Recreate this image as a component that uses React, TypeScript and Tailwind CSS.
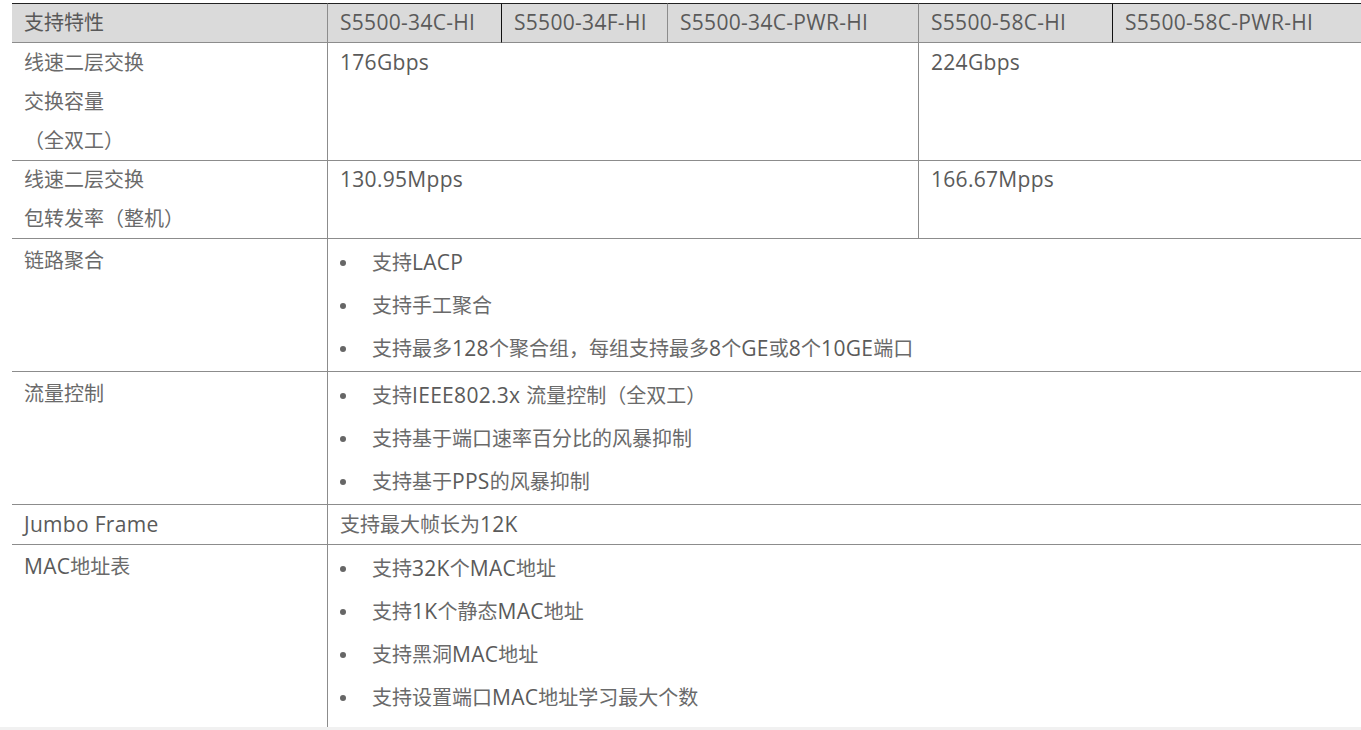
import React from "react";

const font = {
  fontFamily: '"Open Sans", "Noto Sans CJK SC", sans-serif',
};

const td = "border-b border-[#8c8c8c] px-3 align-top leading-[39px]";
const tdL = `${td} border-l`;

// Latin runs look a touch larger than the CJK runs in the source page
function T({ s }: { s: string }) {
  const parts = s.split(/([A-Za-z0-9.\- ]+)/).filter(Boolean);
  return (
    <>
      {parts.map((p, i) =>
        /[A-Za-z0-9]/.test(p) ? (
          <span key={i} className="text-[21px] leading-none tracking-[0.3px] text-[#5a5a5a]">
            {p}
          </span>
        ) : (
          <span key={i}>{p}</span>
        ),
      )}
    </>
  );
}

function Bullets({ items }: { items: string[] }) {
  return (
    <ul className="flex flex-col gap-[4px] pt-[4px] pb-[3px]">
      {items.map((it) => (
        <li key={it} className="flex h-[39px] items-center leading-[39px]">
          <span className="mr-[26px] inline-block h-[6px] w-[6px] shrink-0 rounded-full bg-[#666]" />
          <span>
            <T s={it} />
          </span>
        </li>
      ))}
    </ul>
  );
}

const th =
  "border-t border-b border-t-[#222] border-b-[#8c8c8c] px-3 text-left font-normal leading-[38px]";

export default function App() {
  return (
    <div className="h-[730px] w-[1361px] overflow-hidden bg-white" style={font}>
      <div className="h-[727px] overflow-hidden pl-3 pt-[3px]">
        <table className="w-[1500px] table-fixed border-separate border-spacing-0 text-[20px] text-[#6a6a6a]">
          <colgroup>
            <col className="w-[315px]" />
            <col className="w-[174px]" />
            <col className="w-[166px]" />
            <col className="w-[251px]" />
            <col className="w-[194px]" />
            <col />
          </colgroup>
          <thead>
            <tr className="bg-[#dadada] text-[#585858]">
              <th className={th}>支持特性</th>
              <th className={`${th} border-l border-l-[#8c8c8c]`}>
                <T s="S5500-34C-HI" />
              </th>
              <th className={`${th} border-l border-l-[#111]`}>
                <T s="S5500-34F-HI" />
              </th>
              <th className={`${th} border-l border-l-[#8c8c8c]`}>
                <T s="S5500-34C-PWR-HI" />
              </th>
              <th className={`${th} border-l border-l-[#8c8c8c]`}>
                <T s="S5500-58C-HI" />
              </th>
              <th className={`${th} border-l border-l-[#111]`}>
                <T s="S5500-58C-PWR-HI" />
              </th>
            </tr>
          </thead>
          <tbody className="[&_td]:border-[#8c8c8c]">
            <tr>
              <td className={td}>
                线速二层交换
                <br />
                交换容量
                <br />
                （全双工）
              </td>
              <td className={tdL} colSpan={3}>
                <T s="176Gbps" />
              </td>
              <td className={tdL} colSpan={2}>
                <T s="224Gbps" />
              </td>
            </tr>
            <tr>
              <td className={`${td} !leading-[38.5px]`}>
                线速二层交换
                <br />
                包转发率（整机）
              </td>
              <td className={`${tdL} !leading-[38.5px]`} colSpan={3}>
                <T s="130.95Mpps" />
              </td>
              <td className={`${tdL} !leading-[38.5px]`} colSpan={2}>
                <T s="166.67Mpps" />
              </td>
            </tr>
            <tr>
              <td className={`${td} pt-[2px]`}>链路聚合</td>
              <td className={tdL} colSpan={5}>
                <Bullets
                  items={[
                    "支持LACP",
                    "支持手工聚合",
                    "支持最多128个聚合组，每组支持最多8个GE或8个10GE端口",
                  ]}
                />
              </td>
            </tr>
            <tr>
              <td className={`${td} pt-[2px]`}>流量控制</td>
              <td className={tdL} colSpan={5}>
                <Bullets
                  items={[
                    "支持IEEE802.3x 流量控制（全双工）",
                    "支持基于端口速率百分比的风暴抑制",
                    "支持基于PPS的风暴抑制",
                  ]}
                />
              </td>
            </tr>
            <tr>
              <td className={td}>
                <T s="Jumbo Frame" />
              </td>
              <td className={tdL} colSpan={5}>
                <T s="支持最大帧长为12K" />
              </td>
            </tr>
            <tr>
              <td className="px-3 pt-[2px] align-top leading-[39px]">
                <T s="MAC地址表" />
              </td>
              <td className="border-l px-3 pb-3 align-top leading-[39px]" colSpan={5}>
                <Bullets
                  items={[
                    "支持32K个MAC地址",
                    "支持1K个静态MAC地址",
                    "支持黑洞MAC地址",
                    "支持设置端口MAC地址学习最大个数",
                  ]}
                />
              </td>
            </tr>
          </tbody>
        </table>
      </div>
      <div className="h-[3px] bg-[#f1f1f1]" />
    </div>
  );
}
